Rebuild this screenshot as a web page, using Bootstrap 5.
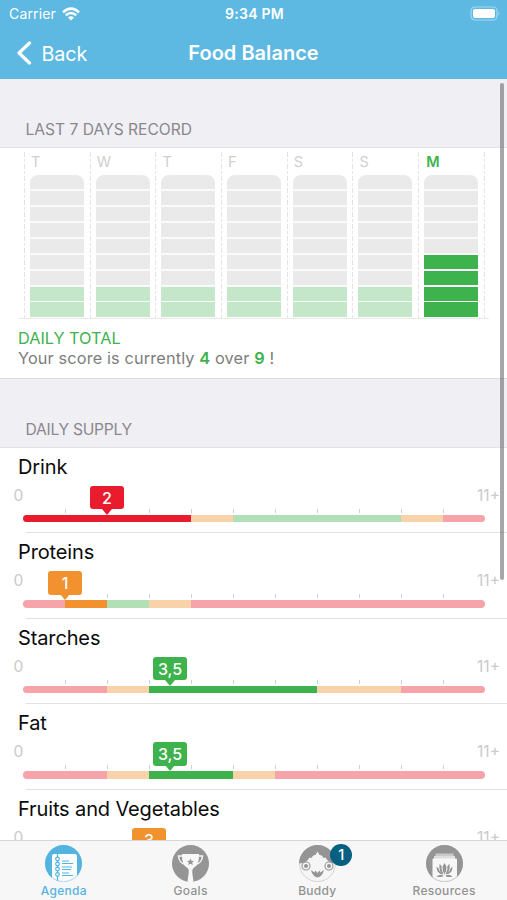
<!DOCTYPE html>
<html lang="en">
<head>
<meta charset="utf-8">
<meta name="viewport" content="width=device-width, initial-scale=1">
<title>Food Balance</title>
<link href="https://cdn.jsdelivr.net/npm/bootstrap@5.3.0/dist/css/bootstrap.min.css" rel="stylesheet">
<style>
  body { font-family: Inter, "Liberation Sans", sans-serif; height: 900px; overflow: hidden; }
  .app-screen { height: 900px; }
  .app-header { background: #5db8e2; height: 79px; }
  .status-bar { height: 27px; font-size: 14px; padding: 0 7px 0 9px; }
  .clock { letter-spacing: .25px; }
  .carrier { letter-spacing: .15px; margin-right: 6px; }
  .title-bar { height: 52px; font-size: 20px; padding: 0 17px; }
  .page-title { letter-spacing: .02px; }
  .back-label { padding-left: 9.5px; font-size: 19.8px; letter-spacing: -.15px; line-height: 30px; padding-top: 1px; }
  .three-col { display: grid; grid-template-columns: 1fr auto 1fr; align-items: center; }
  .section-title { background: #f0eff4; color: #88888d; font-size: 15.6px; line-height: 20px; padding: 0 25.5px 7.5px; height: 69px; border-bottom: 1px solid #e3e3e6; }
  .section-title.second { border-top: 1px solid #dcdce0; height: 69.5px; padding-bottom: 7px; letter-spacing: -.25px; }
  .chart-box { height: 230px; padding: 4px 18px 0; }
  .chart-grid { height: 167px; width: 471px; padding: 0 4px 0 6px; border-bottom: 1px solid #e8e8e8; }
  .day-col { width: 65.7px; padding-left: 6px; color: #cfcfcf; font-size: 14.5px; line-height: 20px; background: repeating-linear-gradient(#e2e2e2 0 5px, #fff 5px 7px, #e6e6e6 7px 10px, #fff 10px 12px) 0 0 / 1px 100% no-repeat; }
  .day-col.end-line { width: 1px; padding: 0; }
  .day-letter { padding-left: 1px; }
  .day-col.today { color: #3eb24c; font-weight: 700; }
  .today .day-letter { padding-left: 2px; font-weight: 600; }
  .day-bar { width: 54px; height: 142px; margin-top: 3px; background: #eaeaea; border-radius: 8px 8px 0 0; position: relative; overflow: hidden; display: flex; align-items: flex-end; }
  .day-bar::after { content: ""; position: absolute; inset: 0; background: repeating-linear-gradient(transparent 0 14.4px, #f9faf9 14.4px 15.93px); }
  .day-fill { width: 100%; background: #c4e7c9; }
  .today .day-fill { background: #3eb24c; }
  .green { color: #3eb24c; }
  .score { color: #7d7d7d; font-size: 16.3px; line-height: 20px; padding-top: 9px; }
  .score-line { letter-spacing: .14px; }
  .score-line b { font-weight: 600; }
  .supply-row { height: 85.5px; padding: 7px 0 0 18px; background: linear-gradient(#e2e2e4, #e2e2e4) 26px 100% / 100% 1px no-repeat; }
  .supply-name { color: #0b0b0b; font-size: 20px; line-height: 24px; letter-spacing: -.13px; }
  .scale-ends { color: #cacaca; font-size: 15.6px; line-height: 20px; margin: 7px 7px 0 -4.5px; }
  .track-wrap { width: 462px; margin-left: 5px; position: relative; padding-top: 9px; }
  .track { height: 7.5px; border-radius: 4px; overflow: hidden; }
  .ticks { position: absolute; top: 3px; left: 42px; width: 379px; height: 4px; background: repeating-linear-gradient(90deg, #cfcfcf 0 1px, transparent 1px 42px); }
  .pin { position: absolute; top: -20px; width: 34px; height: 23.5px; margin-left: -17px; border-radius: 3px; color: #fff; font-size: 16px; font-weight: 500; line-height: 24.5px; text-align: center; }
  .pin::after { content: ""; position: absolute; left: 12px; top: 23px; border: 5px solid transparent; border-top: 6px solid; border-top-color: inherit; border-bottom: 0; }
  .pin.bad { background: #e91c2d; border-color: #e91c2d; }
  .pin.fair { background: #f1922e; border-color: #f1922e; }
  .pin.good { background: #3eb24c; border-color: #3eb24c; }
  .bad { background: #e91c2d; } .fair { background: #f1922e; } .good { background: #3eb24c; }
  .bad-l { background: #f6a4aa; } .fair-l { background: #fad2aa; } .good-l { background: #b1e0b7; }
  .tab-bar { height: 60px; background: #f7f7f7; border-top: 1px solid #d6d6d6; color: #929292; font-size: 12px; font-weight: 500; letter-spacing: .3px; }
  .tab-bar .tab-item { padding: 4px 0 0 1px; line-height: 14px; }
  .tab-item svg { display: block; margin-bottom: 2px; }
  .tab-item.selected { color: #55b3df; }
  .count-badge { position: absolute; left: 31.5px; top: -1px; width: 22px; height: 22px; border-radius: 50%; background: #075f82; color: #fff; font-size: 14.5px; line-height: 22px; text-align: center; letter-spacing: 0; }
  .scroll-thumb { position: absolute; left: 499.5px; top: 83px; width: 4px; height: 497px; border-radius: 2px; background: rgba(80,80,84,.5); z-index: 5; }
</style>
</head>
<body>
<div class="app-screen d-flex flex-column position-relative overflow-hidden bg-white">
  <header class="app-header text-white flex-shrink-0">
    <div class="status-bar three-col">
      <div class="d-flex align-items-center"><span class="carrier">Carrier</span>
        <svg width="18" height="14" viewBox="0 0 18 14" fill="none" stroke="#fff" stroke-width="2.500"><path d="M1 5.300Q9-2 17 5.300M3.800 8.300Q9 3.700 14.200 8.300"/><path d="M6 10.500Q9 8 12 10.500L9 13.500Z" fill="#fff" stroke="none"/></svg>
      </div>
      <span class="fw-semibold clock">9:34 PM</span>
      <svg class="ms-auto" width="31" height="15" viewBox="0 0 31 15"><rect x="2" y="1" width="26" height="13" rx="4" fill="none" stroke="#a6d8f0" stroke-width="1.200"/><rect x="4" y="3" width="22" height="9" rx="2" fill="#fff"/><path d="M29.500 5.500Q31.500 7.500 29.500 9.500Z" fill="#a6d8f0"/></svg>
    </div>
    <div class="title-bar three-col">
      <div class="d-flex align-items-center">
        <svg width="15" height="24" viewBox="0 0 15 24" fill="none" stroke="#fff" stroke-width="3.200" stroke-linecap="round" stroke-linejoin="round"><path d="M12.500 2L2 12L12.500 22"/></svg>
        <span class="back-label">Back</span>
      </div>
      <span class="fw-semibold page-title">Food Balance</span>
      <span></span>
    </div>
  </header>

  <main class="flex-grow-1 overflow-hidden">
    <div class="section-title d-flex align-items-end">LAST 7 DAYS RECORD</div>
    <section class="chart-box">
      <div class="chart-grid d-flex">
        <div class="day-col"><div class="day-letter">T</div><div class="day-bar"><div class="day-fill" style="height:22%"></div></div></div>
        <div class="day-col"><div class="day-letter">W</div><div class="day-bar"><div class="day-fill" style="height:22%"></div></div></div>
        <div class="day-col"><div class="day-letter">T</div><div class="day-bar"><div class="day-fill" style="height:22%"></div></div></div>
        <div class="day-col"><div class="day-letter">F</div><div class="day-bar"><div class="day-fill" style="height:22%"></div></div></div>
        <div class="day-col"><div class="day-letter">S</div><div class="day-bar"><div class="day-fill" style="height:22%"></div></div></div>
        <div class="day-col"><div class="day-letter">S</div><div class="day-bar"><div class="day-fill" style="height:22%"></div></div></div>
        <div class="day-col today"><div class="day-letter">M</div><div class="day-bar"><div class="day-fill" style="height:44.300%"></div></div></div>
        <div class="day-col end-line"></div>
      </div>
      <div class="score"><div class="green">DAILY TOTAL</div>
      <div class="score-line">Your score is currently <b class="green">4</b> over <b class="green">9</b> !</div></div>
    </section>
    <div class="section-title second d-flex align-items-end">DAILY SUPPLY</div>

    <section>
      <div class="supply-row">
        <div class="supply-name">Drink</div>
        <div class="scale-ends d-flex justify-content-between"><span>0</span><span>11+</span></div>
        <div class="track-wrap"><div class="ticks"></div>
          <div class="track d-flex"><i class="bad" style="flex:4"></i><i class="fair-l" style="flex:1"></i><i class="good-l" style="flex:4"></i><i class="fair-l" style="flex:1"></i><i class="bad-l" style="flex:1"></i></div>
          <div class="pin bad" style="left:18.18%">2</div></div>
      </div>
      <div class="supply-row">
        <div class="supply-name">Proteins</div>
        <div class="scale-ends d-flex justify-content-between"><span>0</span><span>11+</span></div>
        <div class="track-wrap"><div class="ticks"></div>
          <div class="track d-flex"><i class="bad-l" style="flex:1"></i><i class="fair" style="flex:1"></i><i class="good-l" style="flex:1"></i><i class="fair-l" style="flex:1"></i><i class="bad-l" style="flex:7"></i></div>
          <div class="pin fair" style="left:9.09%">1</div></div>
      </div>
      <div class="supply-row">
        <div class="supply-name">Starches</div>
        <div class="scale-ends d-flex justify-content-between"><span>0</span><span>11+</span></div>
        <div class="track-wrap"><div class="ticks"></div>
          <div class="track d-flex"><i class="bad-l" style="flex:2"></i><i class="fair-l" style="flex:1"></i><i class="good" style="flex:4"></i><i class="fair-l" style="flex:2"></i><i class="bad-l" style="flex:2"></i></div>
          <div class="pin good" style="left:31.82%">3,5</div></div>
      </div>
      <div class="supply-row">
        <div class="supply-name">Fat</div>
        <div class="scale-ends d-flex justify-content-between"><span>0</span><span>11+</span></div>
        <div class="track-wrap"><div class="ticks"></div>
          <div class="track d-flex"><i class="bad-l" style="flex:2"></i><i class="fair-l" style="flex:1"></i><i class="good" style="flex:2"></i><i class="fair-l" style="flex:1"></i><i class="bad-l" style="flex:5"></i></div>
          <div class="pin good" style="left:31.82%">3,5</div></div>
      </div>
      <div class="supply-row">
        <div class="supply-name">Fruits and Vegetables</div>
        <div class="scale-ends d-flex justify-content-between"><span>0</span><span>11+</span></div>
        <div class="track-wrap"><div class="pin fair" style="left:27.27%">3</div></div>
      </div>
    </section>
  </main>

  <nav class="tab-bar row g-0 flex-shrink-0 text-center">
    <div class="col tab-item selected d-flex flex-column align-items-center">
      <svg width="37" height="37" viewBox="0 0 37 37"><defs><clipPath id="disc"><circle cx="18.500" cy="18.500" r="18.500"/></clipPath></defs>
        <g clip-path="url(#disc)"><rect width="37" height="37" fill="#55b3df"/><rect x="7" y="9" width="25" height="32" rx="2" fill="#fafcfd"/>
        <g stroke="#55b3df" fill="none"><path d="M12.500 9V37" stroke-width="1.200"/><g fill="#fafcfd" stroke-width="1.200"><circle cx="12.500" cy="14" r="1.800"/><circle cx="12.500" cy="19" r="1.800"/><circle cx="12.500" cy="24" r="1.800"/><circle cx="12.500" cy="29.500" r="1.800"/></g><path d="M17 16H24M17 18.500H28M17 22H27M17 24.500H26M17 28H24M17 30.500H28" stroke-width="1.200"/></g></g>
        <circle cx="18.500" cy="18.500" r="18" fill="none" stroke="#55b3df" stroke-opacity=".35"/></svg>
      <span>Agenda</span>
    </div>
    <div class="col tab-item d-flex flex-column align-items-center">
      <svg width="37" height="37" viewBox="0 0 37 37"><circle cx="18.500" cy="18.500" r="18.500" fill="#949594"/>
        <g fill="none" stroke="#f8f8f8" stroke-width="1.500"><path d="M11 11H6.500C7 16 8.500 18.500 13.500 19.500M26 11H30.500C30 16 28.500 18.500 23.500 19.500"/></g>
        <path d="M10 9H27Q27.500 20 21.500 23Q20 24 20.300 28L21.500 36.500Q18.500 37.500 15.500 36.500L16.700 28Q17 24 15.500 23Q9.500 20 10 9Z" fill="#f8f8f8"/>
        <path d="M18.500 13.500L19.500 15.800L22 16L20.200 17.600L20.800 20L18.500 18.700L16.200 20L16.800 17.600L15 16L17.500 15.800Z" fill="#949594"/></svg>
      <span>Goals</span>
    </div>
    <div class="col tab-item d-flex flex-column align-items-center">
      <div class="position-relative">
      <svg width="37" height="37" viewBox="0 0 37 37"><circle cx="18.500" cy="18.500" r="18" fill="#f5f5f5" stroke="#d5d5d5"/>
        <path d="M0 18.500A18.500 18.500 0 0 1 37 18.500L33 18Q28.500 16.500 26.500 12.500L24.500 13Q23 9.500 20.500 10L18.500 6.500L16.500 10Q14 9.500 12.500 13L10.500 12.500Q8.500 16.500 4 18Z" fill="#949594"/>
        <g fill="#f5f5f5" stroke="#949594" stroke-width="1.100"><circle cx="7" cy="21" r="4"/><circle cx="30" cy="21" r="4"/></g><g fill="#949594"><circle cx="7" cy="21" r="2"/><circle cx="30" cy="21" r="2"/></g>
        <path d="M12 25L15.500 27.500L16.500 25.500L18.500 28L20.500 25.500L21.500 27.500L25 25Q23.500 31.500 18.500 32.500Q13.500 31.500 12 25Z" fill="#949594"/></svg>
      <span class="count-badge">1</span></div>
      <span>Buddy</span>
    </div>
    <div class="col tab-item d-flex flex-column align-items-center">
      <svg width="37" height="37" viewBox="0 0 37 37"><g clip-path="url(#disc)"><rect width="37" height="37" fill="#949594"/><path d="M9.500 8.500H27.500V11H9.500Z" fill="#c9c9c9"/><path d="M8 11H29V14H8Z" fill="#dedede"/><rect x="6.500" y="13.500" width="24.500" height="26" rx="1" fill="#f7f7f7"/>
        <g fill="#949594"><path d="M18.500 18Q22.500 23 18.500 29.500Q14.500 23 18.500 18ZM13.500 19Q16.500 21 15.500 24L17.500 29.500Q12.500 27 13.500 19ZM23.500 19Q20.500 21 21.500 24L19.500 29.500Q24.500 27 23.500 19ZM10.500 21.500Q13 23 13.500 26L17 29.500Q10.500 29 10.500 21.500ZM26.500 21.500Q24 23 23.500 26L20 29.500Q26.500 29 26.500 21.500Z"/><path d="M10.500 31.500Q14 28.500 17.500 30.500L16 32H12ZM26.500 31.500Q23 28.500 19.500 30.500L21 32H25Z"/></g></g>
        <circle cx="18.500" cy="18.500" r="18" fill="none" stroke="#949594" stroke-opacity=".35"/></svg>
      <span>Resources</span>
    </div>
  </nav>
  <div class="scroll-thumb"></div>
</div>
<script src="https://cdn.jsdelivr.net/npm/bootstrap@5.3.0/dist/js/bootstrap.bundle.min.js"></script>
</body>
</html>
